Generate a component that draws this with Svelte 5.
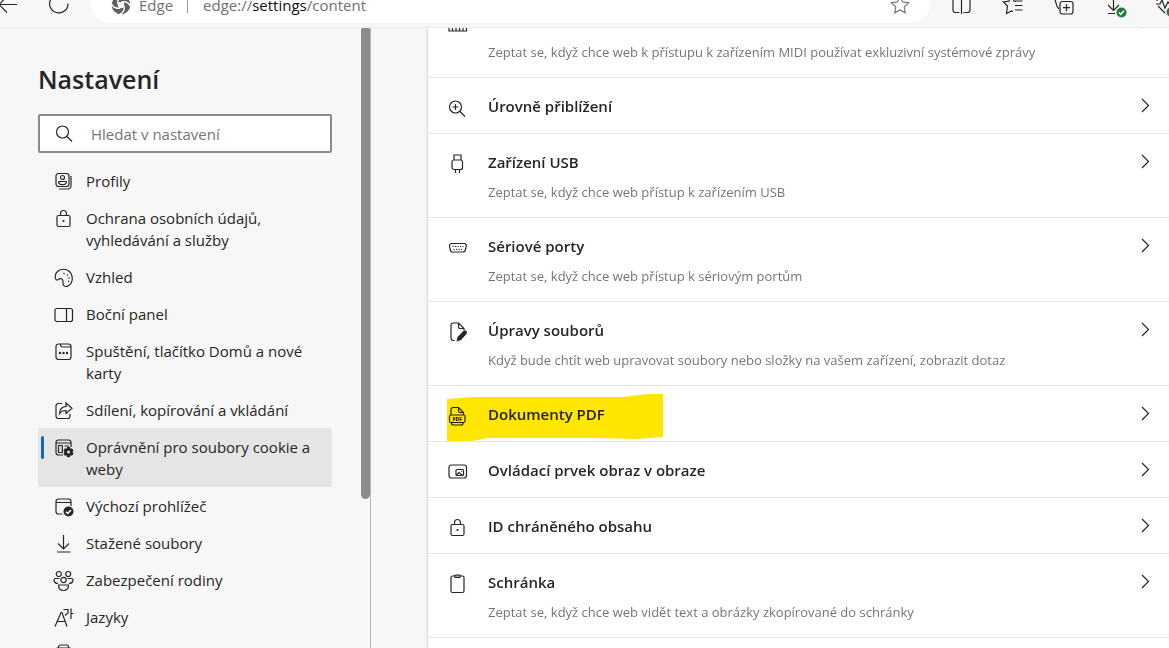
<script lang="ts">
	let search = $state('');
	let active = $state('permissions');

	const navItems = [
		{ id: 'profiles', label: 'Profily' },
		{ id: 'lock', label: 'Ochrana osobních údajů, vyhledávání a služby' },
		{ id: 'palette', label: 'Vzhled' },
		{ id: 'sidebar', label: 'Boční panel' },
		{ id: 'startup', label: 'Spuštění, tlačítko Domů a nové karty' },
		{ id: 'share', label: 'Sdílení, kopírování a vkládání' },
		{ id: 'permissions', label: 'Oprávnění pro soubory cookie a weby' },
		{ id: 'browser', label: 'Výchozí prohlížeč' },
		{ id: 'download', label: 'Stažené soubory' },
		{ id: 'family', label: 'Zabezpečení rodiny' },
		{ id: 'languages', label: 'Jazyky' },
		{ id: 'printer', label: 'Tiskárny' }
	];

	const permissions = [
		{
			icon: 'midi',
			title: 'Zařízení MIDI',
			text: 'Zeptat se, když chce web k přístupu k zařízením MIDI používat exkluzivní systémové zprávy'
		},
		{ icon: 'zoom', title: 'Úrovně přiblížení' },
		{ icon: 'usb', title: 'Zařízení USB', text: 'Zeptat se, když chce web přístup k zařízením USB' },
		{ icon: 'serial', title: 'Sériové porty', text: 'Zeptat se, když chce web přístup k sériovým portům' },
		{
			icon: 'edit',
			title: 'Úpravy souborů',
			text: 'Když bude chtít web upravovat soubory nebo složky na vašem zařízení, zobrazit dotaz'
		},
		{ icon: 'pdf', title: 'Dokumenty PDF', marked: true },
		{ icon: 'pip', title: 'Ovládací prvek obraz v obraze' },
		{ icon: 'lock', title: 'ID chráněného obsahu' },
		{
			icon: 'clipboard',
			title: 'Schránka',
			text: 'Zeptat se, když chce web vidět text a obrázky zkopírované do schránky'
		}
	];
</script>

{#snippet icon(name: string)}
	<svg class="icon" viewBox="0 0 20 20" aria-hidden="true">
		{#if name === 'profiles'}
			<rect x="2" y="1.5" width="13" height="13" rx="2.5" />
			<path d="M17 4v9.5a3.5 3.5 0 0 1-3.500 3.500H5" />
			<circle cx="8.500" cy="5.500" r="2" />
			<path d="M4.700 9.500h7.600v.8c0 1.500-1.500 2.400-3.800 2.400s-3.800-.9-3.800-2.400z" />
		{:else if name === 'lock'}
			<rect x="3" y="6.500" width="13" height="11" rx="1.500" />
			<path d="M6.500 6.500V4.500a3 3 0 0 1 6 0v2" />
			<circle class="solid" cx="9.500" cy="12" r="1.100" />
		{:else if name === 'palette'}
			<path d="M2.200 11.800C.2 9.500 1.200 5.500 3.800 3.300 7 .6 12 .5 15.200 3.300c3.300 2.900 4 8 2 11.700-1.600 3-5.200 4.600-7.300 2.600-1.700-1.600-.4-3.700-1.200-5.500-.6-1.400-2-1.800-3.300-1.200-1.200.5-2.300 1.600-3.200.9z" />
			<circle class="solid" cx="10" cy="5.500" r=".8" />
			<circle class="solid" cx="13.300" cy="7" r=".8" />
			<circle class="solid" cx="15" cy="10" r=".8" />
			<circle class="solid" cx="14.500" cy="13.300" r=".8" />
		{:else if name === 'sidebar'}
			<rect x="1" y="3.500" width="17.500" height="13" rx="2" />
			<path d="M12.500 3.500v13" />
		{:else if name === 'startup'}
			<rect x="2" y="2" width="15" height="15.500" rx="2.500" />
			<path d="M6.500 2v1a2 2 0 0 0 2 2H17" />
			<circle class="solid" cx="6" cy="11" r="1.200" />
			<circle class="solid" cx="9.500" cy="11" r="1.200" />
			<circle class="solid" cx="13" cy="11" r="1.200" />
		{:else if name === 'share'}
			<path d="M8 2.500H4.500A2.500 2.500 0 0 0 2 5v10a2.500 2.500 0 0 0 2.500 2.500h9A2.500 2.500 0 0 0 16 15v-2" />
			<path d="M12 2l6 5.200-6 5.200V9.500c-3 0-5 .9-6.500 3.200.2-4.200 2.500-7 6.500-7.300z" />
		{:else if name === 'permissions'}
			<path d="M9 17H4.500A2.500 2.500 0 0 1 2 14.500v-10A2.500 2.500 0 0 1 4.500 2h10A2.500 2.500 0 0 1 17 4.500V9M2 5h15" />
			<path d="M4.500 7.500h3.800v7H4.500zM10.500 8h4.500" />
			<path class="solid" d="M13.100 9h2.800l.5 1.800 1.500-.5 1.700 2.400-1.200 1.300 1.200 1.400-1.700 2.400-1.500-.5-.6 1.900H13l-.5-1.900-1.600.5-1.500-2.400 1.200-1.400-1.200-1.300 1.500-2.400 1.600.5z" />
			<circle class="hole" cx="14.500" cy="14.100" r="1.500" />
		{:else if name === 'browser'}
			<path d="M8.500 17h-4A2.500 2.500 0 0 1 2 14.500v-10A2.500 2.500 0 0 1 4.500 2h10A2.500 2.500 0 0 1 17 4.500V9M2 5.500h15" />
			<circle class="solid" cx="14.500" cy="14.500" r="5" />
			<path class="light" d="M12 14.700l1.700 1.700 3.300-3.500" />
		{:else if name === 'download'}
			<path d="M9.500 1v14M4 9.500l5.500 5.500L15 9.500M3 18h13.500" />
		{:else if name === 'family'}
			<circle cx="4.800" cy="3" r="2.500" />
			<circle cx="14.200" cy="3" r="2.500" />
			<circle cx="9.500" cy="9" r="2.700" />
			<path d="M5.500 7.500H1.500C-1 7.500-.5 12.500 4 12.500M13.500 7.500h4c2.500 0 2 5-2.500 5M4.500 14h10c0 3.500-2 5.500-5 5.500s-5-2-5-5.500z" />
		{:else if name === 'languages'}
			<path d="M1 18.500L7 4.500h1l5 14M3.500 13.500h7.500M9.500 1.500h4.500v3.500l-3 2.500M17 .5v10.500M17 5.500h2.500" />
		{:else if name === 'printer'}
			<path d="M4.500 3V2a2 2 0 0 1 2-2h6a2 2 0 0 1 2 2v1" />
			<path d="M4.500 13h-3V5a2 2 0 0 1 2-2h12a2 2 0 0 1 2 2v8h-3M4.500 10h10v7h-10z" />
		{:else if name === 'search'}
			<circle cx="8.500" cy="8" r="6" />
			<path d="M13 12.500l5 5" />
		{:else if name === 'midi'}
			<path d="M1 3h17.500v14H1zM4.500 17V9M8 17V9M11.500 17V9M15 17V9" />
		{:else if name === 'zoom'}
			<circle cx="7.500" cy="9" r="6" />
			<path d="M12 13.500l5 5M4.500 9h6M7.500 6v6" />
		{:else if name === 'usb'}
			<rect x="4" y="6" width="10.500" height="9.500" rx="2" />
			<path d="M6 6V1h7v5M7.500 15.500V19M11.500 15.500V19" />
		{:else if name === 'serial'}
			<path d="M3.500 5.500h12.500a2.300 2.300 0 0 1 2.200 2.900l-1 4.100a2 2 0 0 1-2 1.500H4.500a2 2 0 0 1-2-1.500l-1-4.100a2.300 2.300 0 0 1 2-2.900z" />
			<path class="dots" d="M4.500 8.500h11M5.500 11.500h9" />
		{:else if name === 'edit'}
			<path d="M6.500 18.500h-1a2.500 2.500 0 0 1-2.500-2.500V3a2 2 0 0 1 2-2h5.500L16 6.500v2M10.500 1v4a1.500 1.500 0 0 0 1.500 1.500h4" />
			<path class="solid" d="M8.500 19.500l1-4.500 6-6c2.200-1.500 4.500.9 3 3L13 18z" />
		{:else if name === 'pdf'}
			<path d="M3 9V3.500a2 2 0 0 1 2-2h5.500L15.500 6.500V9M10.500 1.500v3.500A1.500 1.500 0 0 0 12 6.500h3.500M3.500 16.500v.5a2 2 0 0 0 2 2h7.500a2 2 0 0 0 2-2v-.5" />
			<rect x="1.500" y="9" width="15.500" height="7.500" rx="1.500" />
			<text x="9.200" y="14.800">PDF</text>
		{:else if name === 'pip'}
			<rect x="1" y="3" width="17.500" height="13" rx="2.500" />
			<rect x="8" y="7.500" width="7.500" height="6" rx="1" />
			<path d="M8.500 13l2.500-2.500 3.500 3" />
			<circle class="solid" cx="13.500" cy="9.500" r=".6" />
		{:else if name === 'clipboard'}
			<rect x="3" y="2" width="13" height="16.500" rx="1.500" />
			<rect class="fill-grey" x="6.500" y="1" width="6" height="2.500" rx="1.200" />
		{:else if name === 'chevron'}
			<path d="M7 3l6.500 6.500L7 16" />
		{:else if name === 'back'}
			<path d="M18 9.500H0M8 1.500l-8 8 8 8" />
		{:else if name === 'reload'}
			<path d="M14.500 1.500A9.200 9.200 0 1 0 18 8.500M14.500-3v5h5" />
		{:else if name === 'star'}
			<path d="M10 1.500l2.600 5.400 6 .8-4.400 4.200 1.100 6-5.300-2.900-5.300 2.900 1.100-6L1.400 7.700l6-.8z" />
		{:else if name === 'split'}
			<path d="M1 0v15a2.500 2.500 0 0 0 2.500 2.500H7.500M9.500 0v19M11.500 17.500h4A2.500 2.500 0 0 0 18 15V0" />
		{:else if name === 'favorites'}
			<path d="M13 6.500l-1.800-.3L8.500.8 6 6.200l-5.500.8 4 4-1 7.500L8.500 16l1.500.8M12.500 6h7M12 10.500h7.500M12 15h7.500" />
		{:else if name === 'collections'}
			<rect x="6" y="6.500" width="13" height="12.500" rx="2.500" />
			<path d="M12.500 9.200v7M9 12.700h7M5 14C3 12.500 2.500 11 2 8L.5 3V0" />
		{:else if name === 'downloads'}
			<path d="M8.500 0v16M3 10l5.500 5.500L14 10M3 18.500h7" />
			<circle class="green" cx="16.500" cy="17.500" r="5" />
			<path class="light" d="M14 17.500l1.700 1.800 3.300-3.500" />
		{:else if name === 'health'}
			<path d="M0 9h4l2-4 3 8 3-6 3 4M2 11l7 7M1 6c0-4 5-6 9-2" />
			<circle class="green" cx="15.500" cy="17" r="5" />
		{/if}
	</svg>
{/snippet}

<div class="page">
	<header>
		<div class="tools tools-left">
			<button aria-label="Zpět">{@render icon('back')}</button>
			<button aria-label="Aktualizovat">{@render icon('reload')}</button>
		</div>
		<div class="address">
			<svg class="logo" viewBox="0 0 20 20" aria-hidden="true">
				<circle cx="10" cy="10" r="6.300" />
				<path d="M7 9C6 5 8 2 12 0M11 7c4-1 7 1 9 5M13 11c1 4-1 7-5 9M9 13c-4 1-7-1-9-5" />
			</svg>
			<span class="brand">Edge</span>
			<span class="url">edge://<b>settings</b>/content</span>
			<button class="fav" aria-label="Přidat do oblíbených">{@render icon('star')}</button>
		</div>
		<div class="tools tools-right">
			<button aria-label="Rozdělená obrazovka">{@render icon('split')}</button>
			<button aria-label="Oblíbené">{@render icon('favorites')}</button>
			<button aria-label="Kolekce">{@render icon('collections')}</button>
			<button aria-label="Stahování">{@render icon('downloads')}</button>
			<button aria-label="Výkon prohlížeče">{@render icon('health')}</button>
		</div>
	</header>

	<div class="body">
		<aside>
			<div class="menu">
				<h1>Nastavení</h1>
				<label class="search">
					{@render icon('search')}
					<input type="text" placeholder="Hledat v nastavení" aria-label="Hledat v nastavení" bind:value={search} />
				</label>
				<nav>
					{#each navItems as item}
						<a href="#{item.id}" class:active={active === item.id} onclick={() => (active = item.id)}>
							{@render icon(item.id)}
							<span>{item.label}</span>
						</a>
					{/each}
				</nav>
			</div>
			<div class="scrollbar"><div class="thumb"></div></div>
		</aside>

		<main>
			{#each permissions as row}
				<button class="row">
					{@render icon(row.icon)}
					<span class="info">
						<span class="title">{row.title}</span>
						{#if row.text}
							<span class="text">{row.text}</span>
						{/if}
					</span>
					{@render icon('chevron')}
					{#if row.marked}
						<svg class="marker" viewBox="0 0 216 47" aria-hidden="true">
							<path d="M0 5L25 3L176 3L200 0H216V43L190 45L150 44L40 44L25 47H0z" />
						</svg>
					{/if}
				</button>
			{/each}
		</main>
	</div>
</div>

<style>
	.page {
		height: 100vh;
		display: flex;
		flex-direction: column;
		overflow: hidden;
		background: #f7f7f7;
		color: #262626;
		font-family: 'Open Sans', 'Noto Sans', sans-serif;
		font-size: 15px;
	}

	button {
		font: inherit;
		color: inherit;
		border: none;
		background: none;
		padding: 0;
		cursor: pointer;
	}

	.icon {
		width: 20px;
		height: 20px;
		flex: none;
		display: block;
		overflow: visible;
		fill: none;
		stroke: #262626;
		stroke-width: 1.2;
	}

	.icon .solid {
		fill: #262626;
		stroke: none;
	}

	.icon .hole {
		fill: #e5e5e5;
		stroke: none;
	}

	.icon .light {
		stroke: #fff;
		stroke-width: 1.5;
	}

	.icon .green {
		fill: #1a7f37;
		stroke: none;
	}

	.icon .fill-grey {
		fill: #999;
	}

	.icon .dots {
		stroke-dasharray: 1.2 1.3;
	}

	.icon text {
		font-size: 5px;
		font-weight: 800;
		text-anchor: middle;
		fill: #262626;
		stroke: none;
	}

	/* toolbar, scrolled partly out of the window */
	header {
		flex: none;
		height: 28px;
		box-sizing: border-box;
		padding-bottom: 4px;
		display: flex;
		align-items: flex-end;
		overflow: hidden;
		border-bottom: 1px solid #ebebeb;
	}

	.tools {
		display: flex;
	}

	.tools button {
		width: 51px;
		height: 36px;
		display: grid;
		place-items: center;
	}

	.tools-left {
		margin-left: -17px;
		margin-right: 6px;
	}

	.tools-right {
		margin-left: 6px;
		margin-right: -22px;
	}

	.address {
		flex: 1;
		height: 36px;
		display: flex;
		align-items: center;
		padding: 0 20px;
		border-radius: 18px;
		background: #fff;
		color: #707070;
	}

	.logo {
		width: 20px;
		height: 20px;
		margin-right: 8px;
		fill: none;
	}

	.logo circle {
		stroke: #5f5f5f;
		stroke-width: 6;
	}

	.logo path {
		stroke: #fff;
		stroke-width: 1.4;
	}

	.brand {
		padding-right: 14px;
		margin-right: 15px;
		border-right: 1px solid #999;
		line-height: 16px;
	}

	.url b {
		font-weight: 400;
		color: #111;
	}

	.fav {
		margin-left: auto;
	}

	.fav .icon {
		stroke: #777;
	}

	.body {
		flex: 1;
		min-height: 0;
		display: flex;
	}

	aside {
		flex: none;
		width: 370px;
		display: flex;
		border-right: 1px solid #b5b5b5;
		overflow: hidden;
	}

	.menu {
		flex: 1;
		padding: 31px 29px 0 38px;
	}

	h1 {
		margin: 0 0 15px;
		font-size: 25px;
		line-height: 40px;
		font-weight: 600;
	}

	.search {
		display: flex;
		align-items: center;
		gap: 17px;
		height: 39px;
		box-sizing: border-box;
		padding: 0 14px;
		margin-bottom: 9px;
		border: 2px solid #8a8a8a;
		border-radius: 2px;
		background: #fff;
	}

	.search input {
		flex: 1;
		min-width: 0;
		padding: 0;
		border: none;
		outline: none;
		background: none;
		font: inherit;
	}

	.search input::placeholder {
		color: #767676;
		opacity: 1;
	}

	nav a {
		position: relative;
		display: flex;
		gap: 12px;
		padding: 8px 10px 7px 16px;
		border-radius: 2px;
		line-height: 22px;
		color: inherit;
		text-decoration: none;
	}

	nav .icon {
		margin-top: 2px;
	}

	nav a.active {
		background: #e5e5e5;
	}

	nav a.active::before {
		content: '';
		position: absolute;
		left: 3px;
		top: 8px;
		width: 3px;
		height: 23px;
		border-radius: 2px;
		background: #0f6cbd;
	}

	.scrollbar {
		width: 9px;
	}

	.thumb {
		height: 76%;
		border-radius: 2px 2px 5px 5px;
		background: #8c8c8c;
	}

	main {
		flex: 1;
		min-width: 0;
		margin-left: 57px;
		overflow: hidden;
		background: #fff;
		box-shadow: 0 0 3px rgba(0, 0, 0, 0.25);
		clip-path: inset(0 0 0 -6px);
	}

	.row {
		position: relative;
		width: 100%;
		display: flex;
		align-items: flex-start;
		padding: 18px 14px 17px 20px;
		border-bottom: 1px solid #e5e5e5;
		text-align: left;
	}

	.row:first-child {
		margin-top: -34px;
	}

	.row .icon {
		margin-bottom: -4px;
	}

	.row .icon:first-child {
		margin-top: 2px;
	}

	.info {
		flex: 1;
		margin-left: 20px;
	}

	.title,
	.text {
		display: block;
		white-space: nowrap;
	}

	.title {
		line-height: 20px;
		font-weight: 600;
	}

	.text {
		margin-top: 12px;
		font-size: 13px;
		line-height: 16px;
		color: #767676;
	}

	.marker {
		position: absolute;
		left: 19px;
		top: 8px;
		width: 216px;
		height: 47px;
		fill: #ffe600;
		mix-blend-mode: multiply;
	}
</style>
